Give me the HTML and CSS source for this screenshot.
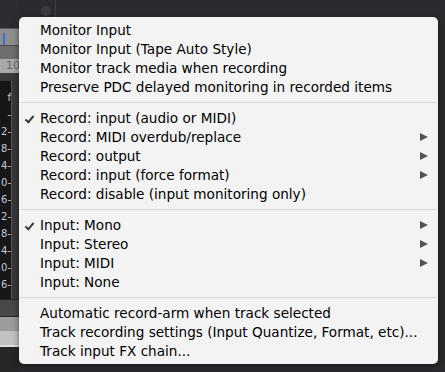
FILE: index.html
```html
<!DOCTYPE html>
<html lang="en">
<head>
  <meta charset="UTF-8">
  <title>Record menu</title>
  <link rel="stylesheet" href="styles.css">
</head>
<body>
  <div class="daw">
    <div class="strip">
      <div class="strip-top"></div>
      <div class="strip-name"><span class="sel-bar"></span></div>
      <div class="strip-row"></div>
      <div class="strip-ruler">10</div>
      <div class="strip-gap"></div>
      <div class="meter">
        <div class="scale">
          <span>f</span><span>-</span><span>2-</span><span>8-</span><span>4-</span><span>0-</span><span>6-</span><span>2-</span><span>8-</span><span>4-</span><span>0-</span><span>6-</span>
        </div>
        <div class="meter-side"></div>
      </div>
      <div class="strip-box"></div>
      <div class="strip-fader"></div>
      <div class="strip-light"></div>
      <div class="strip-bottom"></div>
    </div>
    <div class="top-area">
      <span class="knob"></span>
      <span class="divider"></span>
    </div>
  </div>

  <ul class="menu">
    <li class="item">Monitor Input</li>
    <li class="item">Monitor Input (Tape Auto Style)</li>
    <li class="item">Monitor track media when recording</li>
    <li class="item">Preserve PDC delayed monitoring in recorded items</li>
    <li class="sep"></li>
    <li class="item checked">Record: input (audio or MIDI)</li>
    <li class="item sub">Record: MIDI overdub/replace</li>
    <li class="item sub">Record: output</li>
    <li class="item sub">Record: input (force format)</li>
    <li class="item">Record: disable (input monitoring only)</li>
    <li class="sep"></li>
    <li class="item checked sub">Input: Mono</li>
    <li class="item sub">Input: Stereo</li>
    <li class="item sub">Input: MIDI</li>
    <li class="item">Input: None</li>
    <li class="sep"></li>
    <li class="item">Automatic record-arm when track selected</li>
    <li class="item">Track recording settings (Input Quantize, Format, etc)...</li>
    <li class="item">Track input FX chain...</li>
  </ul>
</body>
</html>
```

FILE: styles.css
```css
:root {
  --menu-bg: #f3f3f3;
  --menu-text: #000000;
  --menu-line: #d8d8d8;
  --arrow: #555555;
  --daw-dark: #2b2b2f;
}

body {
  margin: 0;
  width: 445px;
  height: 372px;
  overflow: hidden;
  background-color: var(--daw-dark);
  font-family: "DejaVu Sans", "Liberation Sans", sans-serif;
  position: relative;
}

/* 背景里的混音台 */
.daw {
  display: flex;
  height: 372px;
}

.strip {
  width: 19px;
  display: flex;
  flex-direction: column;
}

.strip-top {
  height: 28px;
  background-color: #2d2d31;
}

.strip-name {
  height: 16px;
  background-color: #8e8e8e;
  border-top: 1px solid #5a5a5a;
  display: flex;
  align-items: flex-end;
  padding-left: 3px;
}

.sel-bar {
  width: 2px;
  height: 12px;
  background-color: #3a6fd8;
}

.strip-row {
  height: 13px;
  background-color: #6e6e6e;
  border-top: 1px solid #4a4a4a;
}

.strip-ruler {
  height: 14px;
  background-color: #a9a9a9;
  color: #666;
  font-size: 11px;
  line-height: 14px;
  padding-left: 6px;
  overflow: hidden;
  white-space: nowrap;
}

.strip-gap {
  height: 8px;
  background-color: #3a3a3d;
}

.meter {
  height: 218px;
  display: flex;
}

.scale {
  width: 11px;
  background-color: #171719;
  border-right: 1px solid #555;
  display: flex;
  flex-direction: column;
  padding-top: 8px;
  color: #c8c8c8;
  font-size: 10px;
  line-height: 17px;
  text-align: right;
}

.meter-side {
  flex: 1;
  background-color: #38383b;
}

.strip-box {
  height: 16px;
  background-color: #48484b;
  border-top: 1px solid #252527;
  border-bottom: 1px solid #252527;
}

.strip-fader {
  height: 14px;
  background-color: #9c9c9c;
}

.strip-light {
  height: 14px;
  background-color: #c2c2c2;
  border-bottom: 2px solid #e0e0e0;
}

.strip-bottom {
  flex: 1;
  background-color: #262628;
}

.top-area {
  flex: 1;
  display: flex;
  align-items: flex-start;
  padding-left: 22px;
  gap: 4px;
}

.knob {
  width: 10px;
  height: 10px;
  margin-top: 6px;
  border-radius: 50%;
  background-color: #3b3b3f;
}

.divider {
  width: 1px;
  height: 17px;
  background-color: #404044;
}

/* 弹出菜单 */
.menu {
  position: absolute;
  left: 19px;
  top: 17px;
  width: 419px;
  margin: 0;
  padding: 4px 0 3px;
  list-style: none;
  background-color: var(--menu-bg);
  border-radius: 5px;
  box-shadow: 0 2px 6px rgba(0, 0, 0, 0.5);
}

.item {
  position: relative;
  height: 19px;
  line-height: 19px;
  padding-left: 21px;
  font-size: 13.6px;
  color: var(--menu-text);
  white-space: nowrap;
}

.item.checked::before {
  content: "";
  position: absolute;
  left: 8px;
  top: 5px;
  width: 3px;
  height: 7px;
  border-right: 2px solid #3c3c3c;
  border-bottom: 2px solid #3c3c3c;
  transform: rotate(40deg);
}

.item.sub::after {
  content: "";
  position: absolute;
  right: 10px;
  top: 5px;
  border-left: 8px solid var(--arrow);
  border-top: 4.5px solid transparent;
  border-bottom: 4.5px solid transparent;
}

.sep {
  height: 1px;
  margin: 5px 0 6px;
  background-color: var(--menu-line);
}
```
